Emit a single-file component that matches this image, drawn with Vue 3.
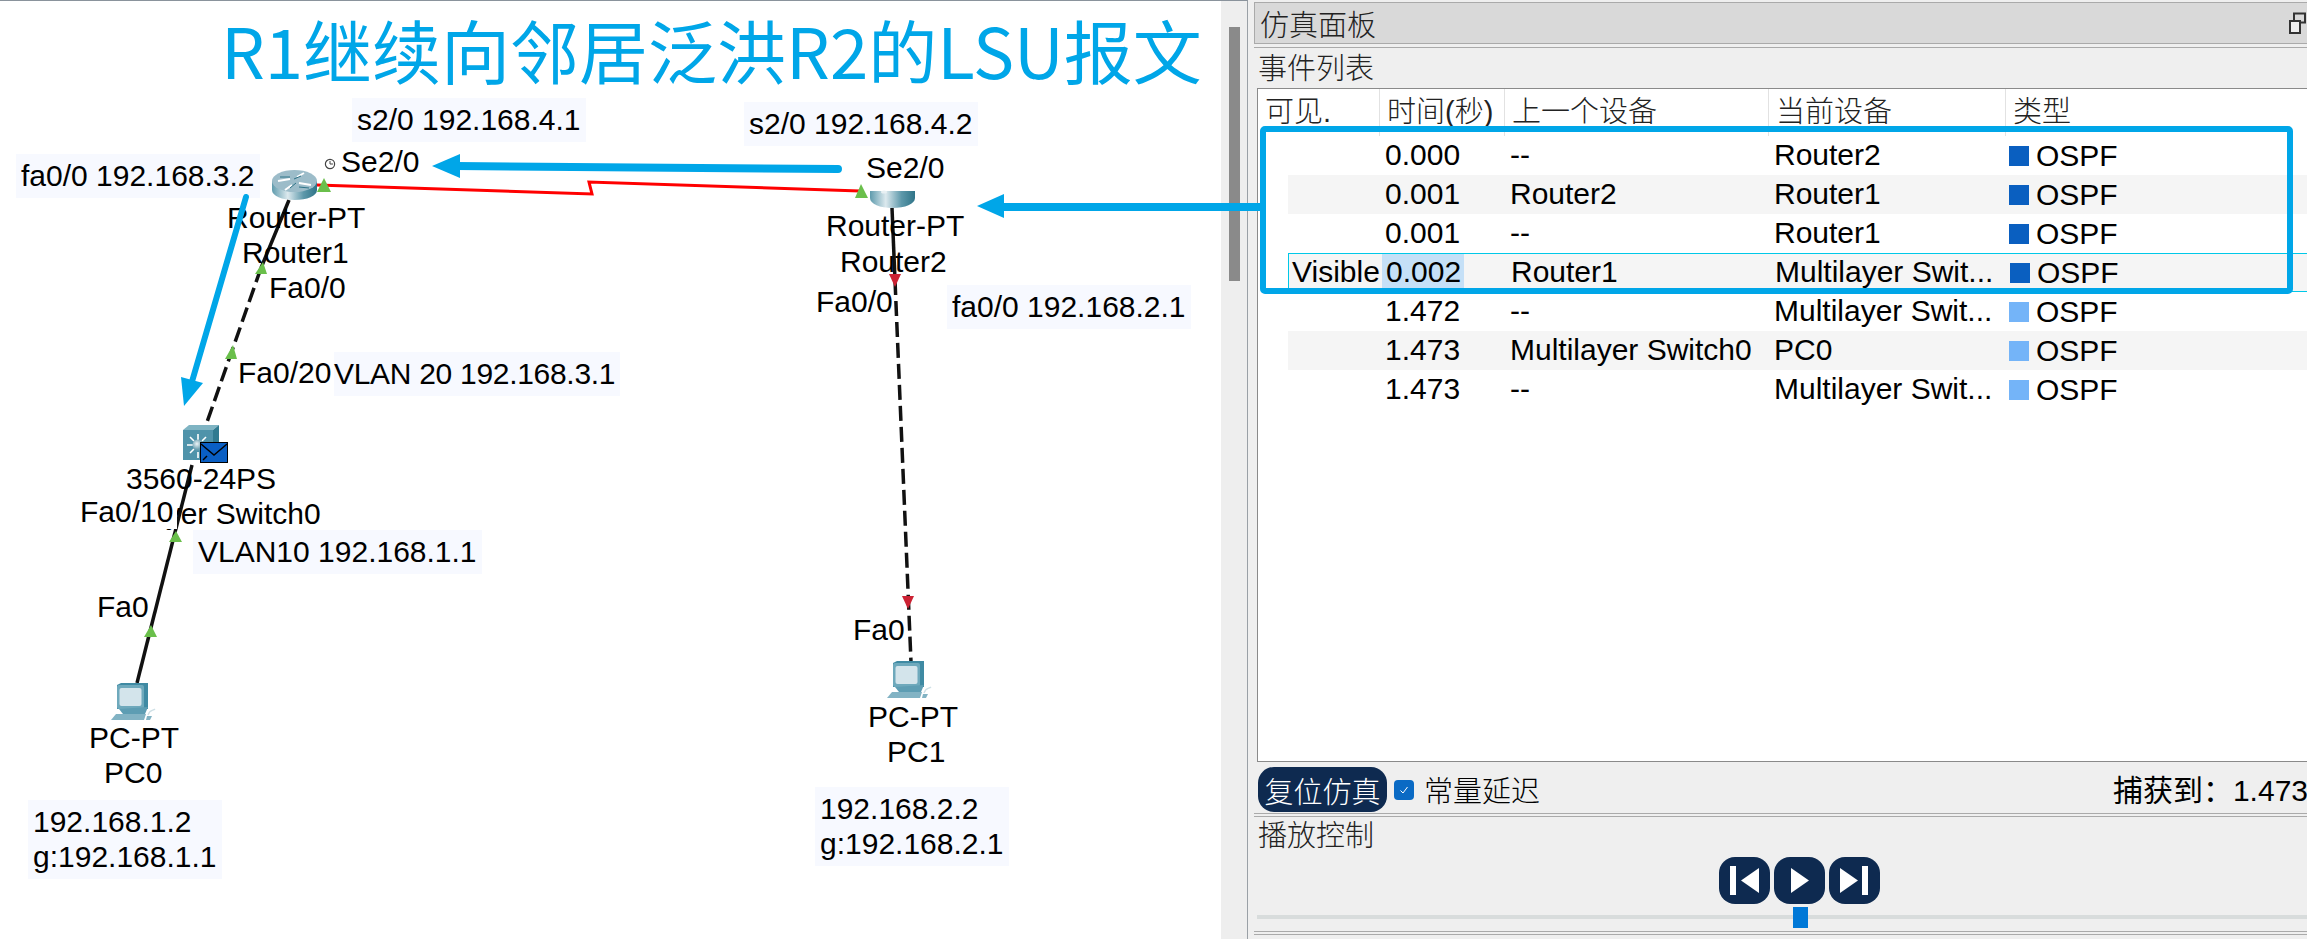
<template>
  <div class="screen">
    <div class="canvas">
      <svg class="links" width="1221" height="939">
        <path d="M317 185 L592 194 L589 182 L860 191" class="serial" />
        <path d="M289 200 L261 268" class="copper" />
        <path d="M261 268 L206 425" class="copper dashed" />
        <path d="M192 465 L137 683" class="copper" />
        <path d="M892 208 L895 280" class="copper" />
        <path d="M895 280 L911 662" class="copper dashed" />
        <polygon v-for="(t, i) in greenUp" :key="i" :points="t" fill="#6abf4b" />
        <polygon points="889,274 901,274 895,287" fill="#cc2233" />
        <polygon points="902,596 914,596 908,609" fill="#cc2233" />

        <!-- router 1 -->
        <g transform="translate(272 170)">
          <path d="M0 11 V20 C0 26 10 30 22.5 30 S45 26 45 20 V11 Z" fill="url(#routerBody)" />
          <ellipse cx="22.5" cy="11" rx="22.5" ry="11" fill="#9cbcc9" />
          <path d="M6 11 L18 9 M27 13 L39 15 M20 15 L13 20 M25 7 L32 3" stroke="#fff" stroke-width="2" />
          <path d="M8 7 L18 7 M27 17 L37 18 M18 18 L24 13 M22 9 L29 6" stroke="#2f7488" stroke-width="1" />
        </g>
        <!-- router 2, top hidden by the label -->
        <g transform="translate(870 191)">
          <path d="M0 0 V7 C0 13 10 17 22.5 17 S45 13 45 7 V0 Z" fill="url(#routerBody)" />
          <ellipse cx="14" cy="1" rx="3" ry="1.5" fill="#e8f0f3" />
        </g>

        <!-- multilayer switch -->
        <g transform="translate(183 425)">
          <polygon points="0,5 6,0 36,0 30,5" fill="#7fb4c3" />
          <polygon points="30,5 36,0 36,30 30,35" fill="#2f7a90" />
          <rect y="5" width="30" height="30" fill="#4f93aa" />
          <path d="M15 9 V15 M15 27 V33 M4 20 H10 M20 20 H26 M7 12 L11 16 M23 12 L19 16 M7 28 L11 24" stroke="#fff" stroke-width="1.6" />
          <circle cx="15" cy="20" r="5.5" fill="url(#ball)" />
        </g>
        <g transform="translate(200 442)">
          <rect x="0.5" y="0.5" width="27" height="20" fill="#0a5fc4" stroke="#000" />
          <path d="M1 2 L14 13 L27 2" fill="none" stroke="#000" stroke-width="1.4" />
          <path d="M3 18 L7 14" stroke="#000" stroke-width="1.4" />
        </g>

        <g v-for="pc in pcs" :key="pc" :transform="`translate(${pc})`">
          <polygon points="6,2 10,0 37,0 37,26 6,26" fill="#3f8aa3" />
          <rect x="6" y="2" width="27" height="24" rx="2" fill="#6ea9bc" />
          <rect x="8.5" y="5" width="22" height="18" rx="2" fill="#d3e4eb" />
          <polygon points="8,26 37,24 34,31 12,31" fill="#5d9db3" />
          <polygon points="5,31 35,31 33,37 0,37" fill="#82b3c4" />
          <polygon points="36,33 41,33 39,37 35,37" fill="#82b3c4" />
          <path d="M37 32 C39 26 42 28 44 26" stroke="#cfe0e6" fill="none" stroke-width="1.4" />
        </g>
        <defs>
          <linearGradient id="routerBody">
            <stop offset="0" stop-color="#5f9bad" />
            <stop offset="0.35" stop-color="#dce9ee" />
            <stop offset="0.7" stop-color="#5d98aa" />
            <stop offset="1" stop-color="#2f7488" />
          </linearGradient>
          <radialGradient id="ball" cx="0.4" cy="0.4">
            <stop offset="0" stop-color="#eef5f7" />
            <stop offset="1" stop-color="#6a9fb0" />
          </radialGradient>
        </defs>
      </svg>

      <span
        v-for="l in labels"
        :key="l.text"
        class="net-label"
        :class="{ boxed: l.boxed, cover: l.cover, tight: l.tight }"
        :style="{ left: l.x + 'px', top: l.y + 'px' }"
      >{{ l.text }}</span>

      <svg class="clock" width="12" height="12" viewBox="0 0 12 12">
        <circle cx="6" cy="6" r="4.6" fill="#fff" stroke="#444" stroke-width="1.2" />
        <path d="M6 3 V6 H9" fill="none" stroke="#444" />
      </svg>

      <h1 class="slide-title">R1继续向邻居泛洪R2的LSU报文</h1>

      <div class="scrollbar"><div class="thumb"></div></div>
    </div>

    <div class="panel">
      <div class="panel-title">
        <span>仿真面板</span>
        <svg class="restore" width="17" height="22" viewBox="0 0 17 22">
          <rect x="5" y="1.5" width="11" height="9" fill="none" stroke="#333" stroke-width="2" />
          <rect x="1" y="9" width="10" height="12" fill="#efefef" stroke="#333" stroke-width="2" />
        </svg>
      </div>

      <div class="events">
        <div class="section-title">事件列表</div>
        <div class="event-table">
          <div class="table-head">
            <div v-for="h in headers" :key="h">{{ h }}</div>
          </div>
          <div
            v-for="(r, i) in rows"
            :key="i"
            class="table-row"
            :class="{ odd: i % 2 === 1, current: i === 3 }"
          >
            <div class="cell">{{ r.vis }}</div>
            <div class="cell time"><span :class="{ picked: i === 3 }">{{ r.time }}</span></div>
            <div class="cell">{{ r.prev }}</div>
            <div class="cell">{{ r.cur }}</div>
            <div class="cell type">
              <i class="swatch" :style="{ background: r.color }"></i>OSPF
            </div>
          </div>
        </div>

        <div class="controls">
          <button class="reset">复位仿真</button>
          <span class="check">
            <svg width="12" height="12" viewBox="0 0 12 12"><path d="M2.5 6.5 L5 9 L9.5 3" fill="none" stroke="#fff" /></svg>
          </span>
          <span class="check-text">常量延迟</span>
          <span class="captured">捕获到：1.473</span>
        </div>
      </div>

      <div class="rule"></div>

      <div class="play">
        <div class="section-title">播放控制</div>
        <div class="play-buttons">
          <button class="play-btn">
            <svg width="51" height="47" viewBox="0 0 51 47"><rect x="11" y="9" width="6" height="29" fill="#fff" /><polygon points="40,11 40,36 22,23.5" fill="#fff" /></svg>
          </button>
          <button class="play-btn">
            <svg width="51" height="47" viewBox="0 0 51 47"><polygon points="17,11 17,36 35,23.5" fill="#fff" /></svg>
          </button>
          <button class="play-btn">
            <svg width="51" height="47" viewBox="0 0 51 47"><rect x="33" y="9" width="6" height="29" fill="#fff" /><polygon points="11,11 11,36 29,23.5" fill="#fff" /></svg>
          </button>
        </div>
        <div class="slider"><div class="slider-thumb"></div></div>
      </div>

      <div class="rule"></div>
    </div>

    <!-- annotations drawn over the whole shot -->
    <svg class="marks" width="2307" height="939">
      <rect x="1263" y="129" width="1027" height="162" rx="2" fill="none" stroke="#00a6e8" stroke-width="6" />
      <path d="M1260 207 H1000" class="mark-line" />
      <polygon points="977,206 1004,194 1004,218" fill="#00a6e8" />
      <path d="M838 169 L456 166" class="mark-line" />
      <polygon points="432,166 460,154 460,178" fill="#00a6e8" />
      <path d="M246 197 L191 385" class="mark-line thin" />
      <polygon points="184,406 181,377 203,383" fill="#00a6e8" />
    </svg>
  </div>
</template>

<script setup>
const dark = '#0a5fc0'
const light = '#74b4f8'

const greenUp = [
  '317,192 331,192 324,178',
  '855,198 868,198 861,184',
  '255,274 267,274 263,262',
  '225,359 237,359 233,345',
  '169,542 182,542 176,531',
  '144,637 157,637 151,625'
]

const pcs = ['111 683', '887 661']

const labels = [
  { text: 's2/0 192.168.4.1', x: 352, y: 98, boxed: true },
  { text: 'fa0/0 192.168.3.2', x: 16, y: 154, boxed: true },
  { text: 's2/0 192.168.4.2', x: 744, y: 102, boxed: true },
  { text: 'fa0/0 192.168.2.1', x: 947, y: 285, boxed: true },
  { text: 'Se2/0', x: 341, y: 144 },
  { text: 'Router-PT', x: 227, y: 200 },
  { text: 'Router1', x: 242, y: 235 },
  { text: 'Fa0/0', x: 269, y: 270 },
  { text: 'VLAN 20 192.168.3.1', x: 334, y: 352, boxed: true, tight: true },
  { text: 'Fa0/20', x: 238, y: 355 },
  { text: 'Se2/0', x: 866, y: 150 },
  { text: 'Router-PT', x: 826, y: 208 },
  { text: 'Router2', x: 840, y: 244 },
  { text: 'Fa0/0', x: 816, y: 284 },
  { text: '3560-24PS', x: 126, y: 461 },
  { text: 'Multilayer Switch0', x: 79, y: 496 },
  { text: 'Fa0/10', x: 80, y: 494, cover: true },
  { text: 'VLAN10 192.168.1.1', x: 193, y: 530, boxed: true },
  { text: 'Fa0', x: 97, y: 589 },
  { text: 'PC-PT', x: 89, y: 720 },
  { text: 'PC0', x: 104, y: 755 },
  { text: '192.168.1.2\ng:192.168.1.1', x: 28, y: 800, boxed: true },
  { text: 'Fa0', x: 853, y: 612 },
  { text: 'PC-PT', x: 868, y: 699 },
  { text: 'PC1', x: 887, y: 734 },
  { text: '192.168.2.2\ng:192.168.2.1', x: 815, y: 787, boxed: true }
]

const headers = ['可见.', '时间(秒)', '上一个设备', '当前设备', '类型']

const rows = [
  { vis: '', time: '0.000', prev: '--', cur: 'Router2', color: dark },
  { vis: '', time: '0.001', prev: 'Router2', cur: 'Router1', color: dark },
  { vis: '', time: '0.001', prev: '--', cur: 'Router1', color: dark },
  { vis: 'Visible', time: '0.002', prev: 'Router1', cur: 'Multilayer Swit...', color: dark },
  { vis: '', time: '1.472', prev: '--', cur: 'Multilayer Swit...', color: light },
  { vis: '', time: '1.473', prev: 'Multilayer Switch0', cur: 'PC0', color: light },
  { vis: '', time: '1.473', prev: '--', cur: 'Multilayer Swit...', color: light }
]
</script>

<style scoped>
.screen {
  position: relative;
  display: flex;
  width: 2307px;
  height: 939px;
  overflow: hidden;
  background: #fff;
  font-family: "Liberation Sans", "Noto Sans CJK SC", sans-serif;
  font-size: 30px;
  color: #000;
}

.canvas {
  position: relative;
  flex: none;
  width: 1248px;
  height: 939px;
  box-sizing: border-box;
  border-top: 1px solid #8a939c;
  border-right: 1px solid #9aa0a6;
}

.links {
  position: absolute;
  left: 0;
  top: -1px;
}

.serial {
  fill: none;
  stroke: #ff0000;
  stroke-width: 3;
}

.copper {
  fill: none;
  stroke: #111;
  stroke-width: 3.5;
}

.copper.dashed {
  stroke-dasharray: 15 6;
}

.net-label {
  position: absolute;
  margin-top: -1px;
  white-space: pre;
  line-height: 35px;
}

.net-label.boxed {
  padding: 4px 5px 5px;
  background: #f7f9ff;
}

.net-label.tight {
  padding-left: 0;
  letter-spacing: -0.3px;
}

.net-label.cover {
  padding-right: 4px;
  background: #fff;
}

.clock {
  position: absolute;
  left: 324px;
  top: 157px;
}

.slide-title {
  position: absolute;
  left: 221px;
  top: -2px;
  margin: 0;
  font-family: "Noto Sans CJK SC", sans-serif;
  font-size: 69px;
  font-weight: 400;
  line-height: 100px;
  white-space: nowrap;
  color: #00a6e8;
}

.scrollbar {
  position: absolute;
  top: 0;
  right: 0;
  bottom: 0;
  width: 26px;
  background: #eee;
}

.thumb {
  width: 11px;
  height: 254px;
  margin: 26px 0 0 8px;
  background: #8a8a8a;
}

.panel {
  flex: none;
  display: flex;
  flex-direction: column;
  width: 1097px;
  height: 939px;
  box-sizing: border-box;
  padding: 2px 0 0 6px;
  background: #efefef;
  font-size: 30px;
}

.panel-title {
  display: flex;
  align-items: center;
  justify-content: space-between;
  height: 42px;
  box-sizing: border-box;
  padding: 0 38px 0 5px;
  background: #d9d9d9;
  border: 1px solid #aaa;
  font-size: 29px;
  font-weight: 300;
  color: #222;
}

.events {
  margin-top: 3px;
  border-top: 1px solid #aaa;
}

.section-title {
  height: 40px;
  padding-left: 4px;
  font-size: 29px;
  font-weight: 300;
  line-height: 38px;
  color: #222;
}

.events .section-title {
  line-height: 42px;
}

.event-table {
  width: 1060px;
  height: 674px;
  box-sizing: border-box;
  margin-left: 3px;
  background: #fff;
  border: 1px solid #8a8a8a;
}

.table-head {
  display: grid;
  grid-template-columns: 122px 125px 264px 237px 1fr;
  height: 47px;
  font-size: 29px;
  font-weight: 300;
  line-height: 46px;
  color: #222;
}

.table-head div {
  padding-left: 7px;
  border-right: 1px solid #e2e2e2;
}

.table-row {
  display: grid;
  grid-template-columns: 92px 125px 264px 237px 1fr;
  height: 39px;
  box-sizing: border-box;
  margin-left: 30px;
  line-height: 38px;
}

.table-row.odd {
  background: #f5f5f5;
}

.table-row.current {
  border: 1px solid #00c8e8;
  line-height: 36px;
}

.cell {
  padding-left: 5px;
  white-space: nowrap;
}

.current .cell:first-child {
  padding-left: 3px;
}

.picked {
  display: inline-block;
  width: 82px;
  height: 35px;
  margin-left: -4px;
  padding-left: 4px;
  box-sizing: border-box;
  background: #c5e0f7;
}

.type {
  display: flex;
  align-items: center;
  gap: 7px;
  padding-left: 3px;
}

.swatch {
  width: 20px;
  height: 20px;
}

.controls {
  display: flex;
  align-items: center;
  height: 51px;
  padding: 4px 37px 0 4px;
  box-sizing: border-box;
}

.reset {
  width: 129px;
  height: 45px;
  padding: 0;
  border: none;
  border-radius: 16px;
  background: #0e2a50;
  color: #fff;
  font-family: inherit;
  font-size: 29px;
  font-weight: 300;
}

.check {
  display: flex;
  align-items: center;
  justify-content: center;
  width: 20px;
  height: 20px;
  margin-left: 7px;
  border-radius: 4px;
  background: #0a6ac4;
}

.check-text {
  margin: 0 0 2px 10px;
  font-size: 29px;
  font-weight: 300;
}

.captured {
  margin: 0 0 4px auto;
}

.rule {
  flex: none;
  height: 2px;
  border-top: 1px solid #aaa;
  border-bottom: 1px solid #aaa;
}

.play {
  display: flex;
  flex-direction: column;
  flex: none;
  height: 114px;
}

.play-buttons {
  display: flex;
  justify-content: center;
  gap: 4px;
}

.play-btn {
  width: 51px;
  height: 47px;
  padding: 0;
  border: none;
  border-radius: 16px;
  background: #0e2a50;
}

.play-btn svg {
  display: block;
}

.slider {
  position: relative;
  height: 4px;
  margin: 11px 0 0 3px;
  background: #d8dcdc;
}

.slider-thumb {
  position: absolute;
  left: 50%;
  top: -8px;
  width: 15px;
  height: 21px;
  margin-left: -8px;
  background: #0078d7;
}

.marks {
  position: absolute;
  left: 0;
  top: 0;
  pointer-events: none;
}

.mark-line {
  fill: none;
  stroke: #00a6e8;
  stroke-width: 8;
  stroke-linecap: round;
}

.mark-line.thin {
  stroke-width: 6;
}
</style>

<style>
html, body {
  margin: 0;
  overflow: hidden;
}
</style>
